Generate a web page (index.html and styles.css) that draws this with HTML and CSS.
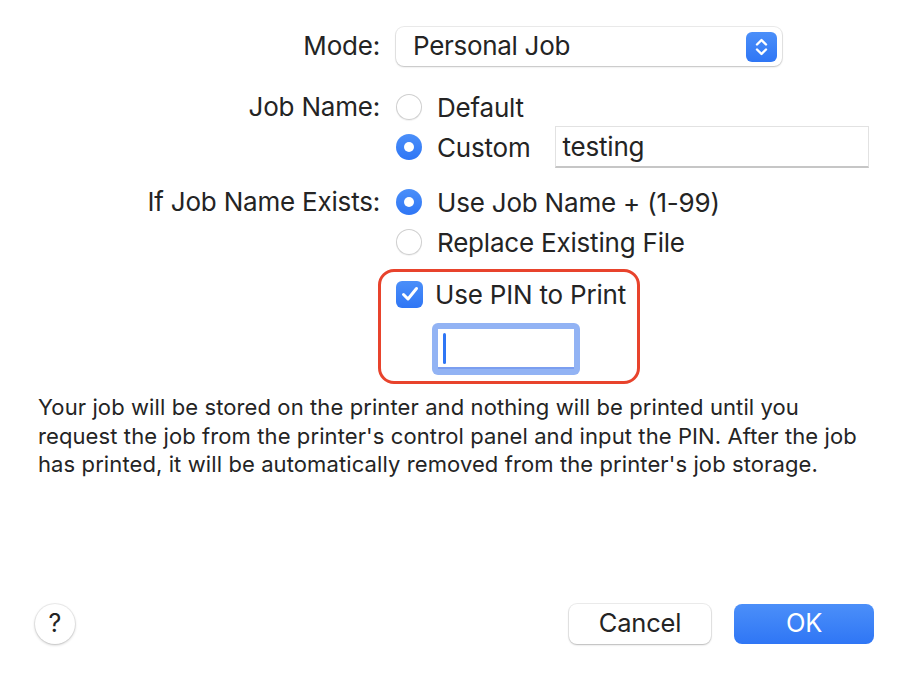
FILE: index.html
```html
<!DOCTYPE html>
<html>
<head>
<meta charset="utf-8">
<link rel="stylesheet" href="styles.css">
</head>
<body>
<div class="dialog">
  <div class="form">
    <div class="label">Mode:</div>
    <div class="control">
      <div class="popup">
        <span class="popup-text">Personal Job</span>
        <span class="stepper">
          <svg width="31" height="30" viewBox="0 0 31 30"><path d="M11 12.5 L15.5 8 L20 12.5" fill="none" stroke="#fff" stroke-width="2.4" stroke-linecap="round" stroke-linejoin="round"/><path d="M11 17.5 L15.5 22 L20 17.5" fill="none" stroke="#fff" stroke-width="2.4" stroke-linecap="round" stroke-linejoin="round"/></svg>
        </span>
      </div>
    </div>

    <div class="label sec-job">Job Name:</div>
    <div class="control sec-job">
      <div class="option"><span class="radio"></span><span>Default</span></div>
      <div class="option"><span class="radio on"></span><span>Custom</span><div class="field">testing</div></div>
    </div>

    <div class="label sec-exists">If Job Name Exists:</div>
    <div class="control sec-exists">
      <div class="option"><span class="radio on"></span><span>Use Job Name + (1-99)</span></div>
      <div class="option"><span class="radio"></span><span>Replace Existing File</span></div>
    </div>

    <div class="label sec-pin"></div>
    <div class="control sec-pin">
      <div class="pin-group">
        <div class="option"><span class="checkbox"><svg width="26" height="26" viewBox="0 0 26 26"><path d="M6.5 13.5 L11 18 L19.5 7.5" fill="none" stroke="#fff" stroke-width="3" stroke-linecap="round" stroke-linejoin="round"/></svg></span><span>Use PIN to Print</span></div>
        <div class="pin-field"><span class="caret"></span></div>
        <div class="highlight"></div>
      </div>
    </div>
  </div>

  <p class="desc">Your job will be stored on the printer and nothing will be printed until you<br>request the job from the printer's control panel and input the PIN. After the job<br>has printed, it will be automatically removed from the printer's job storage.</p>

  <div class="footer">
    <div class="help">?</div>
    <div class="buttons">
      <div class="btn cancel">Cancel</div>
      <div class="btn ok">OK</div>
    </div>
  </div>
</div>
</body>
</html>
```
FILE: styles.css
```css
* { box-sizing: border-box; }
html, body { margin: 0; padding: 0; background: #fff; }
body {
  font-family: Inter, "Helvetica Neue", "Liberation Sans", sans-serif;
  color: #242424;
  width: 906px;
  height: 678px;
  overflow: hidden;
}
.dialog {
  height: 678px;
  display: flex;
  flex-direction: column;
}
.form {
  display: grid;
  grid-template-columns: 380px 1fr;
  column-gap: 16px;
  padding-top: 27px;
  font-size: 26px;
}
.label {
  text-align: right;
  line-height: 40px;
  letter-spacing: -0.2px;
}
.form > .label:first-child { line-height: 38px; }
.sec-job { margin-top: 21px; }
.sec-exists { margin-top: 15px; }
.sec-pin { margin-top: 12px; }

.popup {
  width: 386px;
  height: 39px;
  background: #fff;
  border-radius: 8px;
  box-shadow: 0 0 0 1px rgba(0,0,0,0.08), 0 1px 2px rgba(0,0,0,0.18);
  display: flex;
  align-items: center;
  justify-content: space-between;
  padding: 0 5px 0 17px;
}
.popup-text { letter-spacing: -0.3px; margin-top: -2px; }
.stepper {
  width: 31px;
  height: 30px;
  border-radius: 6px;
  background: linear-gradient(#4b8ff9, #2f76f5);
  display: flex;
}

.option {
  display: flex;
  align-items: center;
  height: 40px;
  letter-spacing: -0.2px;
}
.radio {
  width: 26px;
  height: 26px;
  border-radius: 50%;
  background: #fff;
  box-shadow: inset 0 0 0 1px #cfcfcf, 0 1px 1px rgba(0,0,0,0.06);
  margin-right: 15px;
  flex: none;
  display: flex;
  align-items: center;
  justify-content: center;
}
.radio.on {
  background: linear-gradient(#4b8ff9, #2f76f5);
  box-shadow: none;
}
.radio.on::after {
  content: "";
  width: 10px;
  height: 10px;
  border-radius: 50%;
  background: #fff;
}
.field {
  margin-left: 24px;
  width: 314px;
  height: 42px;
  border: 1px solid #e2e2e2;
  border-bottom: 2px solid #c6c6c6;
  display: flex;
  align-items: center;
  padding-left: 7px;
  background: #fff;
}

.pin-group {
  position: relative;
  padding-bottom: 9px;
}
.checkbox {
  width: 27px;
  height: 27px;
  border-radius: 6px;
  background: linear-gradient(#4b8ff9, #2f76f5);
  margin-right: 12px;
  display: flex;
  align-items: center;
  justify-content: center;
  flex: none;
}
.pin-field {
  margin-top: 9px;
  margin-left: 36px;
  width: 148px;
  height: 52px;
  border-radius: 6px;
  background: #92b3f4;
  padding: 6px;
  display: flex;
}
.pin-field .caret {
  display: block;
  flex: 1;
  background: #fff;
  border-bottom: 2px solid #7b9ef0;
  position: relative;
}
.pin-field .caret::after {
  content: "";
  position: absolute;
  left: 5px;
  top: 4px;
  width: 3px;
  height: 31px;
  border-radius: 2px;
  background: #2f76f5;
}
.highlight {
  position: absolute;
  left: -18px;
  top: -5px;
  width: 262px;
  height: 115px;
  border: 3px solid #e8432c;
  border-radius: 16px;
  pointer-events: none;
}

.desc {
  margin: 9px 0 0 38px;
  font-size: 22px;
  line-height: 28.5px;
  letter-spacing: 0.1px;
}

.footer {
  margin-top: auto;
  display: flex;
  align-items: center;
  justify-content: space-between;
  padding: 0 32px 34px 35px;
}
.help {
  width: 40px;
  height: 40px;
  border-radius: 50%;
  background: #fff;
  box-shadow: 0 0 0 1px rgba(0,0,0,0.06), 0 1px 3px rgba(0,0,0,0.22);
  display: flex;
  align-items: center;
  justify-content: center;
  font-size: 25px;
  padding-bottom: 2px;
}
.buttons { display: flex; gap: 23px; }
.btn {
  height: 40px;
  border-radius: 8px;
  display: flex;
  align-items: center;
  justify-content: center;
  font-size: 25.5px;
  letter-spacing: -0.2px;
  padding-bottom: 3px;
}
.cancel {
  width: 142px;
  background: #fff;
  box-shadow: 0 0 0 1px rgba(0,0,0,0.07), 0 1px 2px rgba(0,0,0,0.22);
}
.ok {
  width: 140px;
  color: #fff;
  background: linear-gradient(#4b8ff9, #2f76f5);
}
```
